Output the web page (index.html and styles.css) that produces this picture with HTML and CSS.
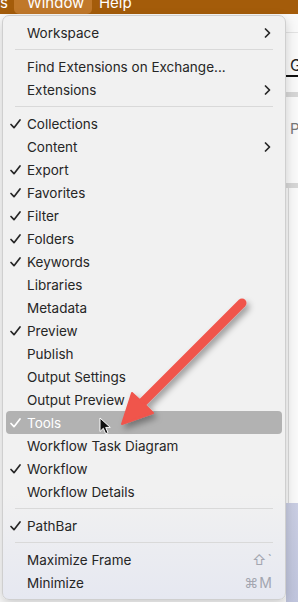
FILE: index.html
```html
<!doctype html>
<html lang="en">
	<head>
		<meta charset="UTF-8" />
		<meta name="viewport" content="width=device-width, initial-scale=1.0" />
		<title>Window menu</title>
		<link rel="stylesheet" href="styles.css">
	</head>
	<body>
		<div class="menubar">
			<span class="bar-item">s</span>
			<span class="bar-item open">Window</span>
			<span class="bar-item">Help</span>
		</div>

		<div class="app">
			<div class="app-line"></div>
			<div class="app-tab">G</div>
			<div class="app-rule"></div>
			<div class="app-text">P</div>
			<div class="app-rule low"></div>
			<div class="app-pane"></div>
			<div class="app-blue"></div>
		</div>

		<div class="menu">
			<div class="row"><span class="mark"></span><span class="label">Workspace</span><svg class="chev" width="7" height="10" viewBox="0 0 7 10"><path d="M1.5 1l4 4-4 4" /></svg></div>
			<div class="sep"></div>
			<div class="row"><span class="mark"></span><span class="label">Find Extensions on Exchange...</span></div>
			<div class="row"><span class="mark"></span><span class="label">Extensions</span><svg class="chev" width="7" height="10" viewBox="0 0 7 10"><path d="M1.5 1l4 4-4 4" /></svg></div>
			<div class="sep"></div>
			<div class="row"><span class="mark"><svg width="11" height="10" viewBox="0 0 11 10"><path d="M1 5.5l3 3.2L10 1" /></svg></span><span class="label">Collections</span></div>
			<div class="row"><span class="mark"></span><span class="label">Content</span><svg class="chev" width="7" height="10" viewBox="0 0 7 10"><path d="M1.5 1l4 4-4 4" /></svg></div>
			<div class="row"><span class="mark"><svg width="11" height="10" viewBox="0 0 11 10"><path d="M1 5.5l3 3.2L10 1" /></svg></span><span class="label">Export</span></div>
			<div class="row"><span class="mark"><svg width="11" height="10" viewBox="0 0 11 10"><path d="M1 5.5l3 3.2L10 1" /></svg></span><span class="label">Favorites</span></div>
			<div class="row"><span class="mark"><svg width="11" height="10" viewBox="0 0 11 10"><path d="M1 5.5l3 3.2L10 1" /></svg></span><span class="label">Filter</span></div>
			<div class="row"><span class="mark"><svg width="11" height="10" viewBox="0 0 11 10"><path d="M1 5.5l3 3.2L10 1" /></svg></span><span class="label">Folders</span></div>
			<div class="row"><span class="mark"><svg width="11" height="10" viewBox="0 0 11 10"><path d="M1 5.5l3 3.2L10 1" /></svg></span><span class="label">Keywords</span></div>
			<div class="row"><span class="mark"></span><span class="label">Libraries</span></div>
			<div class="row"><span class="mark"></span><span class="label">Metadata</span></div>
			<div class="row"><span class="mark"><svg width="11" height="10" viewBox="0 0 11 10"><path d="M1 5.5l3 3.2L10 1" /></svg></span><span class="label">Preview</span></div>
			<div class="row"><span class="mark"></span><span class="label">Publish</span></div>
			<div class="row"><span class="mark"></span><span class="label">Output Settings</span></div>
			<div class="row"><span class="mark"></span><span class="label">Output Preview</span></div>
			<div class="row active"><span class="mark"><svg width="11" height="10" viewBox="0 0 11 10"><path d="M1 5.5l3 3.2L10 1" /></svg></span><span class="label">Tools</span></div>
			<div class="row"><span class="mark"></span><span class="label">Workflow Task Diagram</span></div>
			<div class="row"><span class="mark"><svg width="11" height="10" viewBox="0 0 11 10"><path d="M1 5.5l3 3.2L10 1" /></svg></span><span class="label">Workflow</span></div>
			<div class="row"><span class="mark"></span><span class="label">Workflow Details</span></div>
			<div class="sep"></div>
			<div class="row"><span class="mark"><svg width="11" height="10" viewBox="0 0 11 10"><path d="M1 5.5l3 3.2L10 1" /></svg></span><span class="label">PathBar</span></div>
			<div class="sep"></div>
			<div class="row"><span class="mark"></span><span class="label">Maximize Frame</span><span class="keys">&#8679;`</span></div>
			<div class="row"><span class="mark"></span><span class="label">Minimize</span><span class="keys">&#8984;M</span></div>
		</div>

		<!-- annotation drawn over the screenshot -->
		<svg class="arrow" width="298" height="602" viewBox="0 0 298 602">
			<defs>
				<filter id="shade" x="-20%" y="-20%" width="140%" height="140%">
					<feDropShadow dx="3" dy="4" stdDeviation="3" flood-color="#000" flood-opacity="0.35" />
				</filter>
			</defs>
			<g filter="url(#shade)" fill="#f0544c" stroke="#f0544c">
				<line x1="242" y1="303" x2="143" y2="402" stroke-width="9" stroke-linecap="round" />
				<polygon points="122,424 132,393 143,403 153,413" stroke-width="2" stroke-linejoin="round" />
			</g>
		</svg>

		<svg class="cursor" width="13" height="18" viewBox="0 0 13 18">
			<path d="M1 1v13.5l3.3-3.2 2.4 5.4 2.3-1-2.3-5.3h4.6z" fill="#111" stroke="#fff" stroke-width="1" stroke-linejoin="round" />
		</svg>
	</body>
</html>
```

FILE: styles.css
```css
body {
	margin: 0;
	width: 298px;
	height: 602px;
	overflow: hidden;
	position: relative;
	background: #f9f9f9;
	font-family: Inter, "Noto Sans", sans-serif;
}
.menubar {
	height: 14px;
	overflow: hidden;
	display: flex;
	align-items: flex-end;
	background: rgb(164, 92, 10);
	color: #fff;
	font-size: 15px;
}
.bar-item {
	line-height: 22px;
	padding: 0 7px;
}
.bar-item:first-child {
	padding: 0 6px 0 0;
}
.bar-item.open {
	width: 52px;
	padding: 0 13px;
	background: rgb(192, 120, 42);
	border-radius: 0 0 5px 5px;
}
.app {
	height: 588px;
	display: flex;
	flex-direction: column;
	padding-left: 286px;
}
.app-line {
	height: 18px;
	border-bottom: 1px solid #e2e2e2;
}
.app-tab {
	margin-top: 22px;
	height: 20px;
	font-size: 16px;
	color: #222;
	line-height: 20px;
	padding-left: 4px;
	border-bottom: 2px solid #111;
}
.app-rule {
	margin-top: 15px;
	height: 5px;
	background: #d6d6d6;
}
.app-rule.low {
	margin-top: 45px;
}
.app-text {
	margin-top: 22px;
	font-size: 15px;
	color: #777;
	padding-left: 4px;
}
.app-pane {
	flex: 1;
	border-left: 1px solid #dadada;
	margin-left: 2px;
}
.app-blue {
	height: 99px;
	background: linear-gradient(180deg, #c9cde2, #bfc4dc);
}
.menu {
	position: absolute;
	top: 15px;
	left: 2px;
	width: 284px;
	padding: 5px 0;
	box-sizing: border-box;
	background: linear-gradient(180deg, #f1f1f1 0%, #f1f1f1 82%, #e6e8f1 100%);
	border: 1px solid #cfcfcf;
	border-radius: 7px;
	box-shadow: 0 4px 12px rgba(0, 0, 0, 0.18);
	color: #262626;
	font-size: 13.5px;
}
.row {
	height: 23px;
	margin: 0 3px;
	display: flex;
	align-items: center;
	padding-right: 11px;
	border-radius: 4px;
}
.mark {
	width: 21px;
	flex: none;
	display: flex;
	padding-left: 4px;
	box-sizing: border-box;
}
.mark svg {
	fill: none;
	stroke: #262626;
	stroke-width: 1.7;
	stroke-linecap: round;
	stroke-linejoin: round;
}
.label {
	flex: 1;
}
.chev {
	fill: none;
	stroke: #262626;
	stroke-width: 1.7;
	stroke-linecap: round;
	stroke-linejoin: round;
}
.keys {
	color: #a3a6b0;
	font-size: 14px;
	margin-right: -2px;
	letter-spacing: 1px;
}
.row.active {
	background: #b2b2b2;
	color: #fff;
}
.row.active .mark svg {
	stroke: #fff;
}
.sep {
	height: 11px;
	margin: 0 12px;
	display: flex;
	align-items: center;
}
.sep::after {
	content: "";
	flex: 1;
	border-top: 1px solid #d9d9d9;
}
.arrow {
	position: absolute;
	top: 0;
	left: 0;
	pointer-events: none;
}
.cursor {
	position: absolute;
	top: 417px;
	left: 99px;
}
```
